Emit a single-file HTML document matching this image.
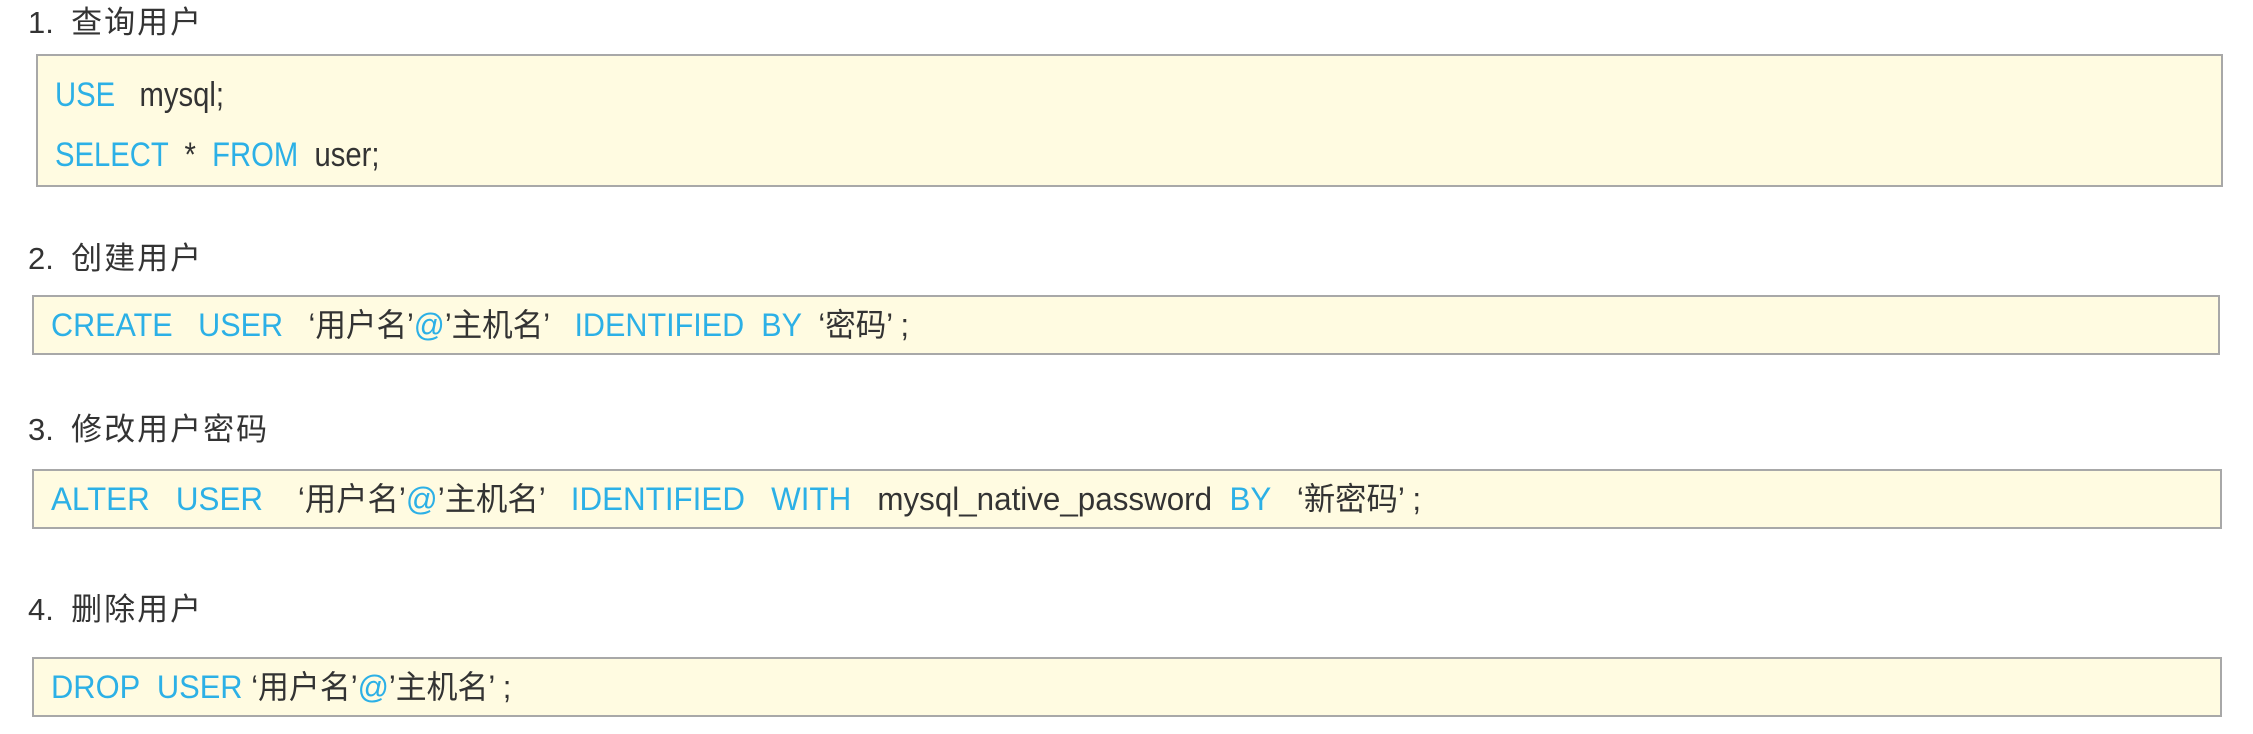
<!DOCTYPE html>
<html><head><meta charset="utf-8">
<style>
html,body{margin:0;padding:0;background:#fff;width:2253px;height:734px;overflow:hidden;position:relative;font-family:"Liberation Sans","Noto Sans CJK SC",sans-serif;}
.h{position:absolute;left:28px;font-size:31px;color:#333;white-space:pre;line-height:1;}
.h b{font-weight:normal;letter-spacing:2px;}
.box{position:absolute;background:#fffbe1;border:2px solid #a8a8a8;box-sizing:border-box;}
.l{position:absolute;white-space:pre;color:#333;line-height:1;transform-origin:0 50%;transform:scaleX(0.965);}
.k{color:#2cb0e6;}
</style></head><body>
<div class="h" style="top:7px">1.  <b>查询用户</b></div>
<div class="box" style="left:36px;top:54px;width:2187px;height:133px;"></div>
<div class="l" style="left:55px;top:78px;font-size:34px;transform:scaleX(0.86)"><span class="k">USE</span>   mysql;</div>
<div class="l" style="left:55px;top:138px;font-size:34px;transform:scaleX(0.86)"><span class="k">SELECT</span>  *  <span class="k">FROM</span>  user;</div>

<div class="h" style="top:243px">2.  <b>创建用户</b></div>
<div class="box" style="left:32px;top:295px;width:2188px;height:60px;"></div>
<div class="l" style="left:51px;top:309px;font-size:32px;transform:scaleX(0.955)"><span class="k">CREATE</span>   <span class="k">USER</span>   ‘用户名’<span class="k">@</span>’主机名’   <span class="k">IDENTIFIED</span>  <span class="k">BY</span>  ‘密码’ ;</div>

<div class="h" style="top:414px">3.  <b>修改用户密码</b></div>
<div class="box" style="left:32px;top:469px;width:2190px;height:60px;"></div>
<div class="l" style="left:51px;top:483px;font-size:32px;transform:scaleX(0.98)"><span class="k">ALTER</span>   <span class="k">USER</span>    ‘用户名’<span class="k">@</span>’主机名’   <span class="k">IDENTIFIED</span>   <span class="k">WITH</span>   mysql_native_password  <span class="k">BY</span>   ‘新密码’ ;</div>

<div class="h" style="top:594px">4.  <b>删除用户</b></div>
<div class="box" style="left:32px;top:657px;width:2190px;height:60px;"></div>
<div class="l" style="left:51px;top:671px;font-size:32px"><span class="k">DROP</span>  <span class="k">USER</span> ‘用户名’<span class="k">@</span>’主机名’ ;</div>
</body></html>
